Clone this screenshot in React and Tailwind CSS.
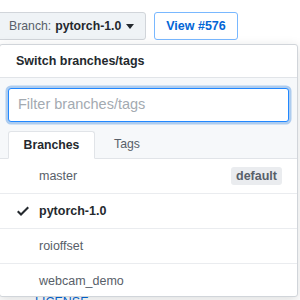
import React from "react";

const font = { fontFamily: '"Liberation Sans", Arial, sans-serif' };

function Caret() {
  return (
    <svg width="8" height="5" viewBox="0 0 8 5" className="ml-[5px]">
      <path d="M0 0h8L4 5z" fill="#24292e" />
    </svg>
  );
}

function Check() {
  return (
    <svg width="12" height="16" viewBox="0 0 12 16" className="text-[#24292e]">
      <path fillRule="evenodd" d="M12 5l-8 8-4-4 1.5-1.5L4 10l6.5-6.5L12 5z" fill="currentColor" />
    </svg>
  );
}

function Row({ name, selected, badge }) {
  return (
    <div className="flex items-center h-[35px] border-b border-[#eaecef] pl-[17px] pr-[15px]">
      <div className="w-[22px] flex items-center">{selected && <Check />}</div>
      <span className={selected ? "text-[12.5px] font-bold text-[#24292e]" : "text-[12.5px] text-[#586069]"}>{name}</span>
      {badge && (
        <span className="ml-auto bg-[#eaecef] rounded-[3px] px-[5px] h-[18px] flex items-center text-[12.5px] font-bold text-[#586069]">
          {badge}
        </span>
      )}
    </div>
  );
}

export default function App() {
  return (
    <div className="w-[300px] h-[300px] overflow-hidden bg-white relative" style={font}>
      <div className="flex gap-[8px] pt-[12px] ml-[-3px]">
        <div className="h-[28px] w-[149px] flex items-center pl-[11px] border border-[#d1d5da] rounded-[3px] bg-[#eff3f6] text-[12.25px]">
          <span className="text-[#586069]">Branch:</span>
          <span className="ml-[4px] font-bold text-[#24292e]">pytorch-1.0</span>
          <Caret />
        </div>
        <div className="h-[28px] w-[84px] flex items-center justify-center border border-[#79b8ff] rounded-[3px] bg-white text-[12.5px] font-bold text-[#0366d6]">
          View #576
        </div>
      </div>
      <div className="absolute left-[35px] top-[295px] text-[12.5px] leading-[14px] text-[#0366d6]">LICENSE</div>
      <div className="absolute left-[-1px] top-[44px] w-[299px] h-[253px] bg-white border border-[#d1d5da] rounded-[3px] shadow-[0_3px_12px_rgba(27,31,35,0.15)] overflow-hidden">
        <div className="h-[33px] flex items-center pl-[16px] border-b border-[#e1e4e8] text-[12.5px] font-bold text-[#24292e]">
          Switch branches/tags
        </div>
        <div className="bg-[#f6f8fa]">
          <div className="px-[8px] pt-[10px] pb-[7px]">
            <div className="h-[34px] rounded-[3px] border border-[#2188ff] shadow-[0_0_0_2.5px_rgba(3,102,214,0.3)] bg-white flex items-center pl-[9px] text-[14.5px] text-[#a3aab1]">
              Filter branches/tags
            </div>
          </div>
          <div className="flex items-end h-[30px] pl-[8px] border-b border-[#e1e4e8]">
            <div className="h-[28px] w-[87px] mb-[-1px] bg-white border border-[#e1e4e8] border-b-white rounded-t-[3px] flex items-center justify-center text-[12.25px] font-bold text-[#24292e]">
              Branches
            </div>
            <div className="h-[28px] px-[19px] flex items-center text-[12.25px] text-[#586069]">Tags</div>
          </div>
        </div>
        <Row name="master" badge="default" />
        <Row name="pytorch-1.0" selected />
        <Row name="roioffset" />
        <Row name="webcam_demo" />
      </div>
    </div>
  );
}
